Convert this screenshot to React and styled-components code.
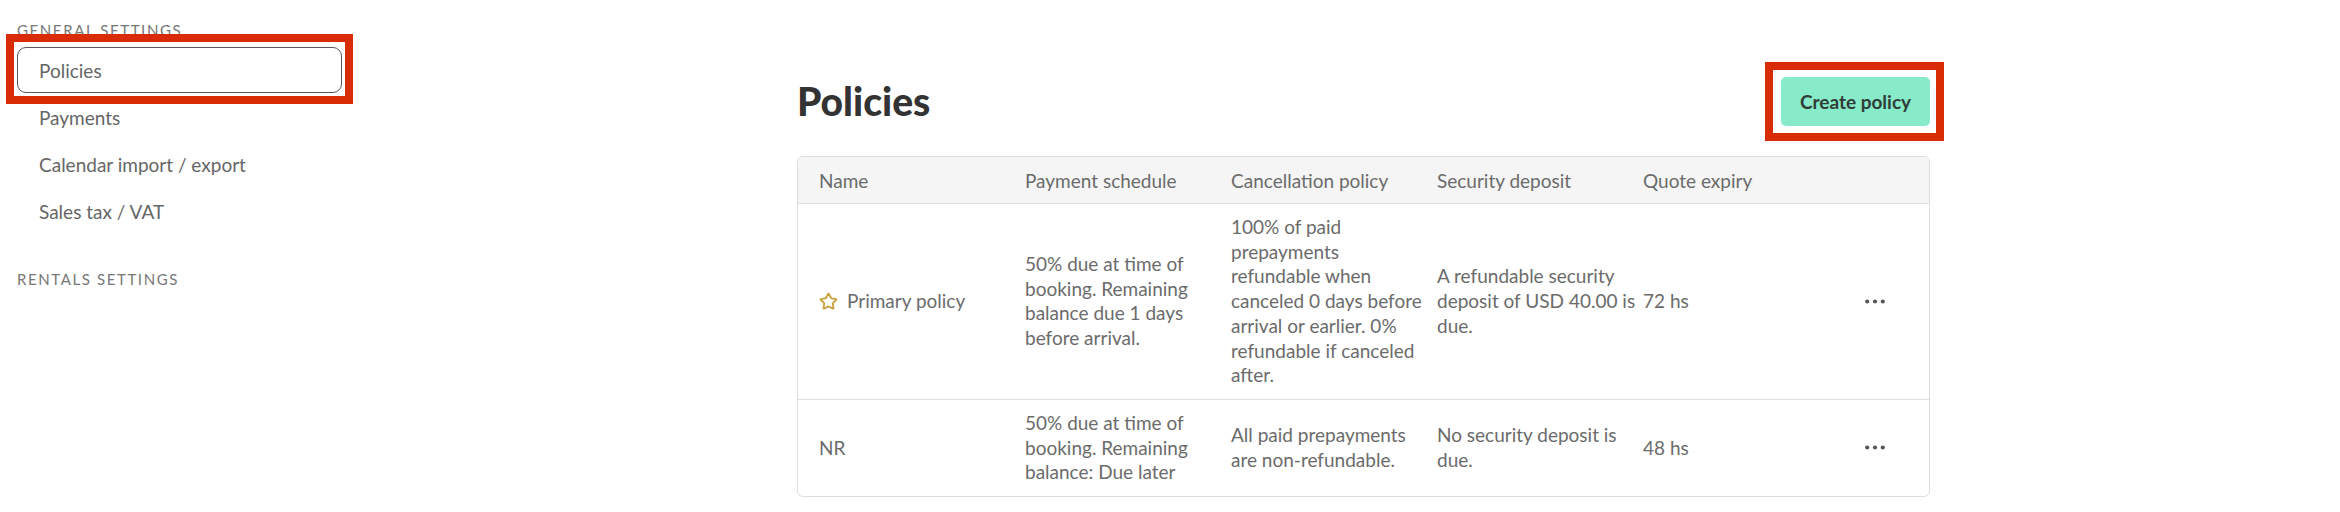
import styled, { createGlobalStyle } from 'styled-components';
import { Star } from 'lucide-react';

const GlobalStyle = createGlobalStyle`
    body {
        margin: 0;
        background: #ffffff;
        font-family: Lato, 'Open Sans', sans-serif;
    }
`;

const sections = [
    { title: 'General settings', items: ['Policies', 'Payments', 'Calendar import / export', 'Sales tax / VAT'] },
    { title: 'Rentals settings', items: [] }
];

const columns = ['Name', 'Payment schedule', 'Cancellation policy', 'Security deposit', 'Quote expiry', ''];

const policies = [
    {
        name: 'Primary policy',
        primary: true,
        schedule: '50% due at time of booking. Remaining balance due 1 days before arrival.',
        cancellation: '100% of paid prepayments refundable when canceled 0 days before arrival or earlier. 0% refundable if canceled after.',
        deposit: 'A refundable security deposit of USD 40.00 is due.',
        expiry: '72 hs'
    },
    {
        name: 'NR',
        primary: false,
        schedule: '50% due at time of booking. Remaining balance: Due later',
        cancellation: 'All paid prepayments are non-refundable.',
        deposit: 'No security deposit is due.',
        expiry: '48 hs'
    }
];

function Dots() {
    return (
        <svg width="20" height="5" viewBox="0 0 20 5">
            <circle cx="2.2" cy="2.5" r="2.1" fill="#555555" />
            <circle cx="10" cy="2.5" r="2.1" fill="#555555" />
            <circle cx="17.8" cy="2.5" r="2.1" fill="#555555" />
        </svg>
    );
}

export default function App() {
    return (
        <>
            <GlobalStyle />
            <Page>
                <Sidebar>
                    {sections.map(section => (
                        <Section key={section.title}>
                            <SectionLabel>{section.title}</SectionLabel>
                            {section.items.map(item => (
                                <NavItem key={item} active={item === 'Policies'}>{item}</NavItem>
                            ))}
                        </Section>
                    ))}
                </Sidebar>
                <Main>
                    <Content>
                        <Header>
                            <Title>Policies</Title>
                            <CreateButton>Create policy</CreateButton>
                        </Header>
                        <Table>
                            <HeadRow>
                                {columns.map((col, i) => <HeadCell key={i} first={i === 0}>{col}</HeadCell>)}
                            </HeadRow>
                            {policies.map(p => (
                                <Row key={p.name}>
                                    <Cell first>
                                        {p.primary && <Star size={19} color="#c9a13d" strokeWidth={2.3} />}
                                        {p.name}
                                    </Cell>
                                    <Cell>{p.schedule}</Cell>
                                    <Cell>{p.cancellation}</Cell>
                                    <Cell>{p.deposit}</Cell>
                                    <Cell>{p.expiry}</Cell>
                                    <ActionCell><Dots /></ActionCell>
                                </Row>
                            ))}
                        </Table>
                    </Content>
                </Main>
            </Page>
        </>
    );
}

const Page = styled.div`
    display: grid;
    grid-template-columns: 387px 1fr;
    min-height: 512px;
`;

const Sidebar = styled.nav`
    padding: 20px 0 0 17px;
    display: flex;
    flex-direction: column;
    gap: 35px;
`;

const Section = styled.div`
    display: flex;
    flex-direction: column;
    gap: 1px;
    width: 325px;
`;

const SectionLabel = styled.div`
    font-size: 15px;
    line-height: 20px;
    letter-spacing: 1.6px;
    text-transform: uppercase;
    color: #777777;
    margin-bottom: 6px;
`;

const NavItem = styled.div`
    position: relative;
    height: 46px;
    box-sizing: border-box;
    display: flex;
    align-items: center;
    padding-left: 21px;
    font-size: 19px;
    color: #666666;
    border: 1px solid ${props => props.active ? '#5a5a5a' : 'transparent'};
    border-radius: 9px;

    ${props => props.active && `
        &::after {
            content: '';
            position: absolute;
            inset: -14px -12px -12px -12px;
            border: 8px solid #d92c04;
        }
    `}
`;

const Main = styled.main`
    display: flex;
    justify-content: center;
`;

const Content = styled.div`
    width: 1133px;
    padding-top: 77px;
`;

const Header = styled.div`
    display: flex;
    justify-content: space-between;
    align-items: center;
    margin-bottom: 30px;
`;

const Title = styled.h1`
    margin: 0;
    font-size: 39px;
    font-weight: 900;
    color: #333333;
    line-height: 49px;
`;

const CreateButton = styled.button`
    position: relative;
    width: 149px;
    height: 49px;
    border: none;
    border-radius: 5px;
    background: #87eac8;
    color: #2f3d38;
    font-family: Lato, sans-serif;
    font-size: 19px;
    font-weight: 700;

    &::after {
        content: '';
        position: absolute;
        inset: -15px -14px -15px -16px;
        border: 8px solid #d92c04;
    }
`;

const Table = styled.div`
    border: 1px solid #dddddd;
    border-radius: 6px;
    overflow: hidden;
`;

const HeadRow = styled.div`
    display: grid;
    grid-template-columns: 227px repeat(4, 206px) 1fr;
    height: 46px;
    background: #f5f5f5;
    border-bottom: 1px solid #e0e0e0;
`;

const HeadCell = styled.div`
    display: flex;
    align-items: center;
    padding-left: ${props => props.first ? '21px' : '0'};
    font-size: 19px;
    color: #6b6b6b;
`;

const Row = styled.div`
    display: grid;
    grid-template-columns: 227px repeat(4, 206px) 1fr;
    border-bottom: 1px solid #e0e0e0;

    &:last-child {
        border-bottom: none;
    }
`;

const Cell = styled.div`
    display: flex;
    align-items: center;
    gap: 9px;
    padding: 11px 5px 11px ${props => props.first ? '21px' : '0'};
    font-size: 19px;
    line-height: 24.7px;
    color: #6b6b6b;
`;

const ActionCell = styled(Cell)`
    padding-left: 16px;
`;
